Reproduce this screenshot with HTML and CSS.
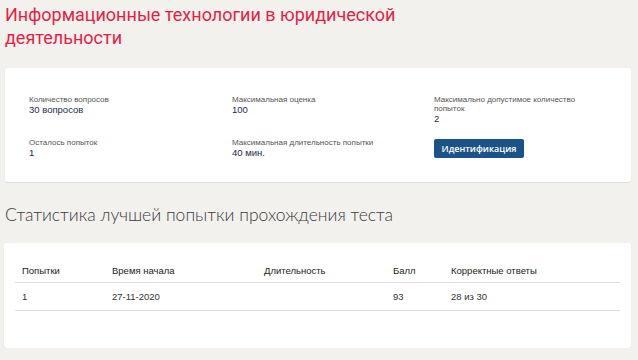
FILE: index.html
```html
<!DOCTYPE html>
<html lang="ru">
<head>
    <meta charset="UTF-8">
    <meta name="viewport" content="width=device-width, initial-scale=1.0">
    <title>Информационные технологии в юридической деятельности</title>
    <link rel="stylesheet" href="styles.css">
</head>
<body>
    <h1 class="page-title">Информационные технологии в юридической деятельности</h1>

    <div class="card info-card">
        <div class="info-grid">
            <div class="info-item">
                <div class="info-label">Количество вопросов</div>
                <div class="info-value">30 вопросов</div>
            </div>
            <div class="info-item">
                <div class="info-label">Максимальная оценка</div>
                <div class="info-value">100</div>
            </div>
            <div class="info-item">
                <div class="info-label">Максимально допустимое количество попыток</div>
                <div class="info-value">2</div>
            </div>
            <div class="info-item">
                <div class="info-label">Осталось попыток</div>
                <div class="info-value">1</div>
            </div>
            <div class="info-item">
                <div class="info-label">Максимальная длительность попытки</div>
                <div class="info-value">40 мин.</div>
            </div>
            <div class="info-item">
                <button class="btn-ident">Идентификация</button>
            </div>
        </div>
    </div>

    <h2 class="section-title">Статистика лучшей попытки прохождения теста</h2>

    <div class="card stats-card">
        <table class="stats-table">
            <thead>
                <tr>
                    <th class="col-try">Попытки</th>
                    <th class="col-start">Время начала</th>
                    <th class="col-dur">Длительность</th>
                    <th class="col-score">Балл</th>
                    <th>Корректные ответы</th>
                </tr>
            </thead>
            <tbody>
                <tr>
                    <td>1</td>
                    <td>27-11-2020</td>
                    <td></td>
                    <td>93</td>
                    <td>28 из 30</td>
                </tr>
            </tbody>
        </table>
    </div>
</body>
</html>
```

FILE: styles.css
```css
body {
    margin: 0;
    padding: 0 7px 0 5px;
    background-color: #f2f1ee;
    font-family: "Open Sans", sans-serif;
    color: #333;
}
.page-title {
    margin: 3px 0 0;
    max-width: 420px;
    font-family: Roboto, sans-serif;
    font-size: 18px;
    font-weight: 400;
    line-height: 23px;
    color: #e61e45;
}
.card {
    background-color: #fff;
    border-radius: 3px;
    box-shadow: 0 1px 1px rgba(0, 0, 0, 0.08);
}
.info-card {
    margin-top: 19px;
    padding: 27px 0 24px 24px;
}
.info-grid {
    display: grid;
    grid-template-columns: 203px 202px 1fr;
    row-gap: 14px;
    font-family: "Liberation Sans", Arial, sans-serif;
}
.info-item {
    max-width: 160px;
}
.info-label {
    font-size: 8px;
    line-height: 9px;
    color: #555;
}
.info-value {
    font-size: 9.5px;
    line-height: 11px;
    color: #1c2b4a;
}
.btn-ident {
    width: 90px;
    height: 19px;
    padding: 0;
    border: none;
    border-radius: 2px;
    background-color: #1b5288;
    color: #fff;
    font-family: "Open Sans", sans-serif;
    font-size: 9px;
    font-weight: 600;
}
.section-title {
    margin: 22px 0 0;
    font-family: Lato, sans-serif;
    font-size: 17.5px;
    font-weight: 300;
    line-height: 22px;
    color: #3b3b3b;
}
.stats-card {
    margin: 17px 0 0 -1px;
    padding: 16px 11px 37px;
}
.stats-table {
    width: 100%;
    border-collapse: collapse;
    font-family: "Liberation Sans", Arial, sans-serif;
    font-size: 9.5px;
    color: #333;
}
.stats-table th,
.stats-table td {
    text-align: left;
    font-weight: 400;
    padding: 0 7px;
    height: 27px;
    border-bottom: 1px solid #dedede;
}
.stats-table th {
    height: 23px;
    color: #222;
}
.col-try { width: 76px; }
.col-start { width: 138px; }
.col-dur { width: 115px; }
.col-score { width: 44px; }
```
